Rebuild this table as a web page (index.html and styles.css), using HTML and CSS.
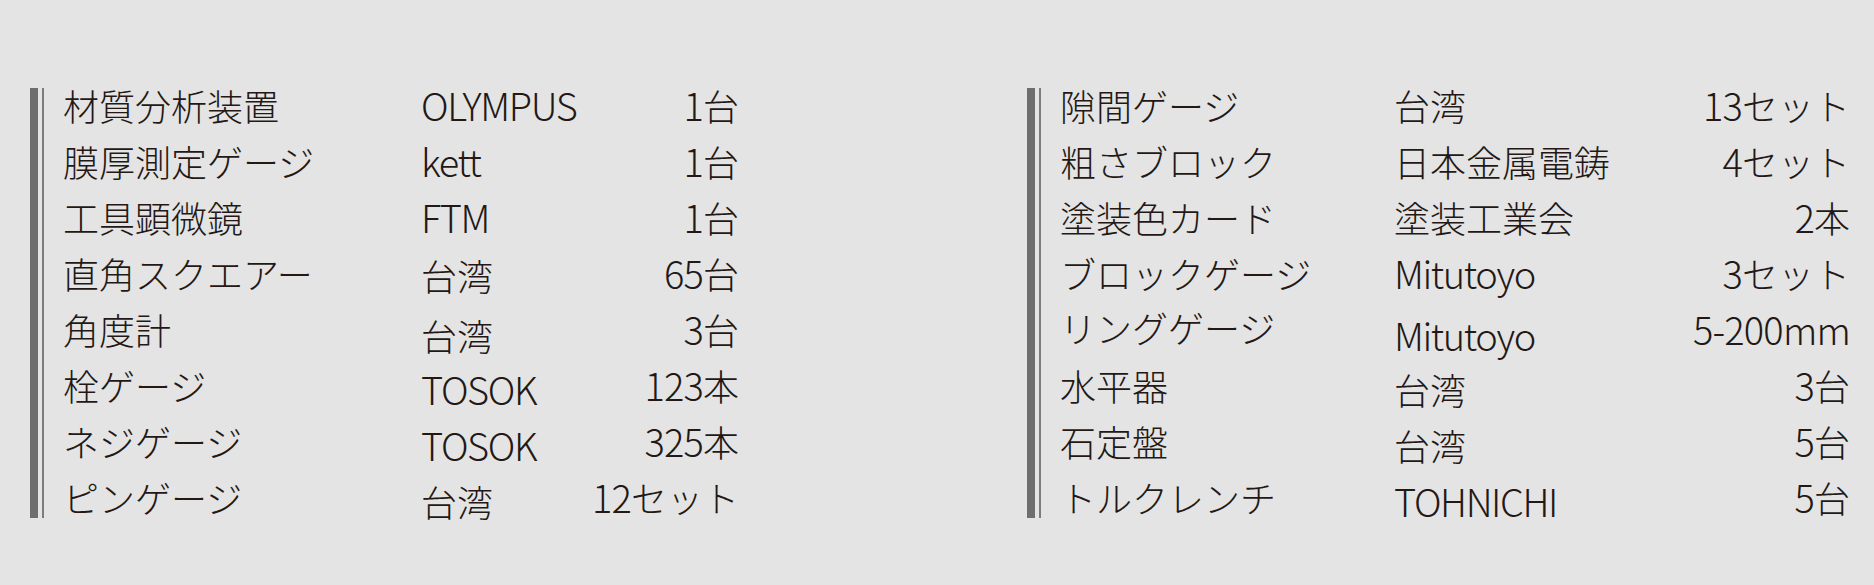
FILE: index.html
```html
<!DOCTYPE html>
<html lang="ja">
<head>
<meta charset="utf-8">
<title>測定機器一覧</title>
<link rel="stylesheet" href="styles.css">
</head>
<body>
<main class="page">
  <section class="block block-left">
    <div class="bar-thick"></div>
    <div class="bar-thin"></div>
    <div class="list">
      <div class="name">材質分析装置</div><div class="maker"><span class="en">OLYMPUS</span></div><div class="qty"><span class="en">1</span>台</div>
      <div class="name">膜厚測定ゲージ</div><div class="maker"><span class="en">kett</span></div><div class="qty"><span class="en">1</span>台</div>
      <div class="name">工具顕微鏡</div><div class="maker"><span class="en">FTM</span></div><div class="qty"><span class="en">1</span>台</div>
      <div class="name">直角スクエアー</div><div class="maker low-1">台湾</div><div class="qty"><span class="en">65</span>台</div>
      <div class="name">角度計</div><div class="maker low-3">台湾</div><div class="qty"><span class="en">3</span>台</div>
      <div class="name">栓ゲージ</div><div class="maker low-2"><span class="en">TOSOK</span></div><div class="qty"><span class="en">123</span>本</div>
      <div class="name">ネジゲージ</div><div class="maker low-2"><span class="en">TOSOK</span></div><div class="qty"><span class="en">325</span>本</div>
      <div class="name">ピンゲージ</div><div class="maker low-2">台湾</div><div class="qty"><span class="en">12</span>セット</div>
    </div>
  </section>
  <section class="block block-right">
    <div class="bar-thick"></div>
    <div class="bar-thin"></div>
    <div class="list">
      <div class="name">隙間ゲージ</div><div class="maker">台湾</div><div class="qty"><span class="en">13</span>セット</div>
      <div class="name">粗さブロック</div><div class="maker">日本金属電鋳</div><div class="qty"><span class="en">4</span>セット</div>
      <div class="name">塗装色カード</div><div class="maker">塗装工業会</div><div class="qty"><span class="en">2</span>本</div>
      <div class="name">ブロックゲージ</div><div class="maker"><span class="en">Mitutoyo</span></div><div class="qty"><span class="en">3</span>セット</div>
      <div class="name up-1">リングゲージ</div><div class="maker low-3"><span class="en">Mitutoyo</span></div><div class="qty"><span class="en">5-200mm</span></div>
      <div class="name">水平器</div><div class="maker low-2">台湾</div><div class="qty"><span class="en">3</span>台</div>
      <div class="name">石定盤</div><div class="maker low-2">台湾</div><div class="qty"><span class="en">5</span>台</div>
      <div class="name">トルクレンチ</div><div class="maker low-2"><span class="en">TOHNICHI</span></div><div class="qty"><span class="en">5</span>台</div>
    </div>
  </section>
</main>
</body>
</html>
```

FILE: styles.css
```css
html, body {
  margin: 0;
  padding: 0;
}

body {
  background: #e4e4e4;
  color: #231815;
  font-family: "Noto Sans CJK JP", "Noto Sans", sans-serif;
  font-weight: 300;
  width: 1874px;
  height: 585px;
  overflow: hidden;
}

.page {
  display: flex;
  padding: 77px 0 0 30px;
}

.block {
  display: flex;
  flex-shrink: 0;
}

.block-left {
  width: 709px;
  margin-right: 288px;
}

.block-right {
  width: 823px;
}

.bar-thick {
  flex: 0 0 8px;
  background: #6e6e6e;
  margin: 11px 4px 7px 0;
}

.bar-thin {
  flex: 0 0 2px;
  background: #7c7c7c;
  margin: 11px 19px 7px 0;
}

.list {
  flex: 1 1 0;
  min-width: 0;
  display: grid;
  grid-auto-rows: 56px;
  font-size: 36px;
  line-height: 56px;
  white-space: nowrap;
}

.block-left .list {
  grid-template-columns: 358px minmax(0, 1fr) auto;
}

.block-right .list {
  grid-template-columns: 334px minmax(0, 1fr) auto;
}

.qty {
  text-align: right;
}

.en {
  font-size: 38px;
  letter-spacing: -1px;
}

.maker .en {
  letter-spacing: -1.4px;
}

.qty .en {
  letter-spacing: -0.8px;
}

.low-1 { padding-top: 2px; }
.low-2 { padding-top: 4px; }
.low-3 { padding-top: 6px; }
.up-1 { margin-top: -2px; }
```
